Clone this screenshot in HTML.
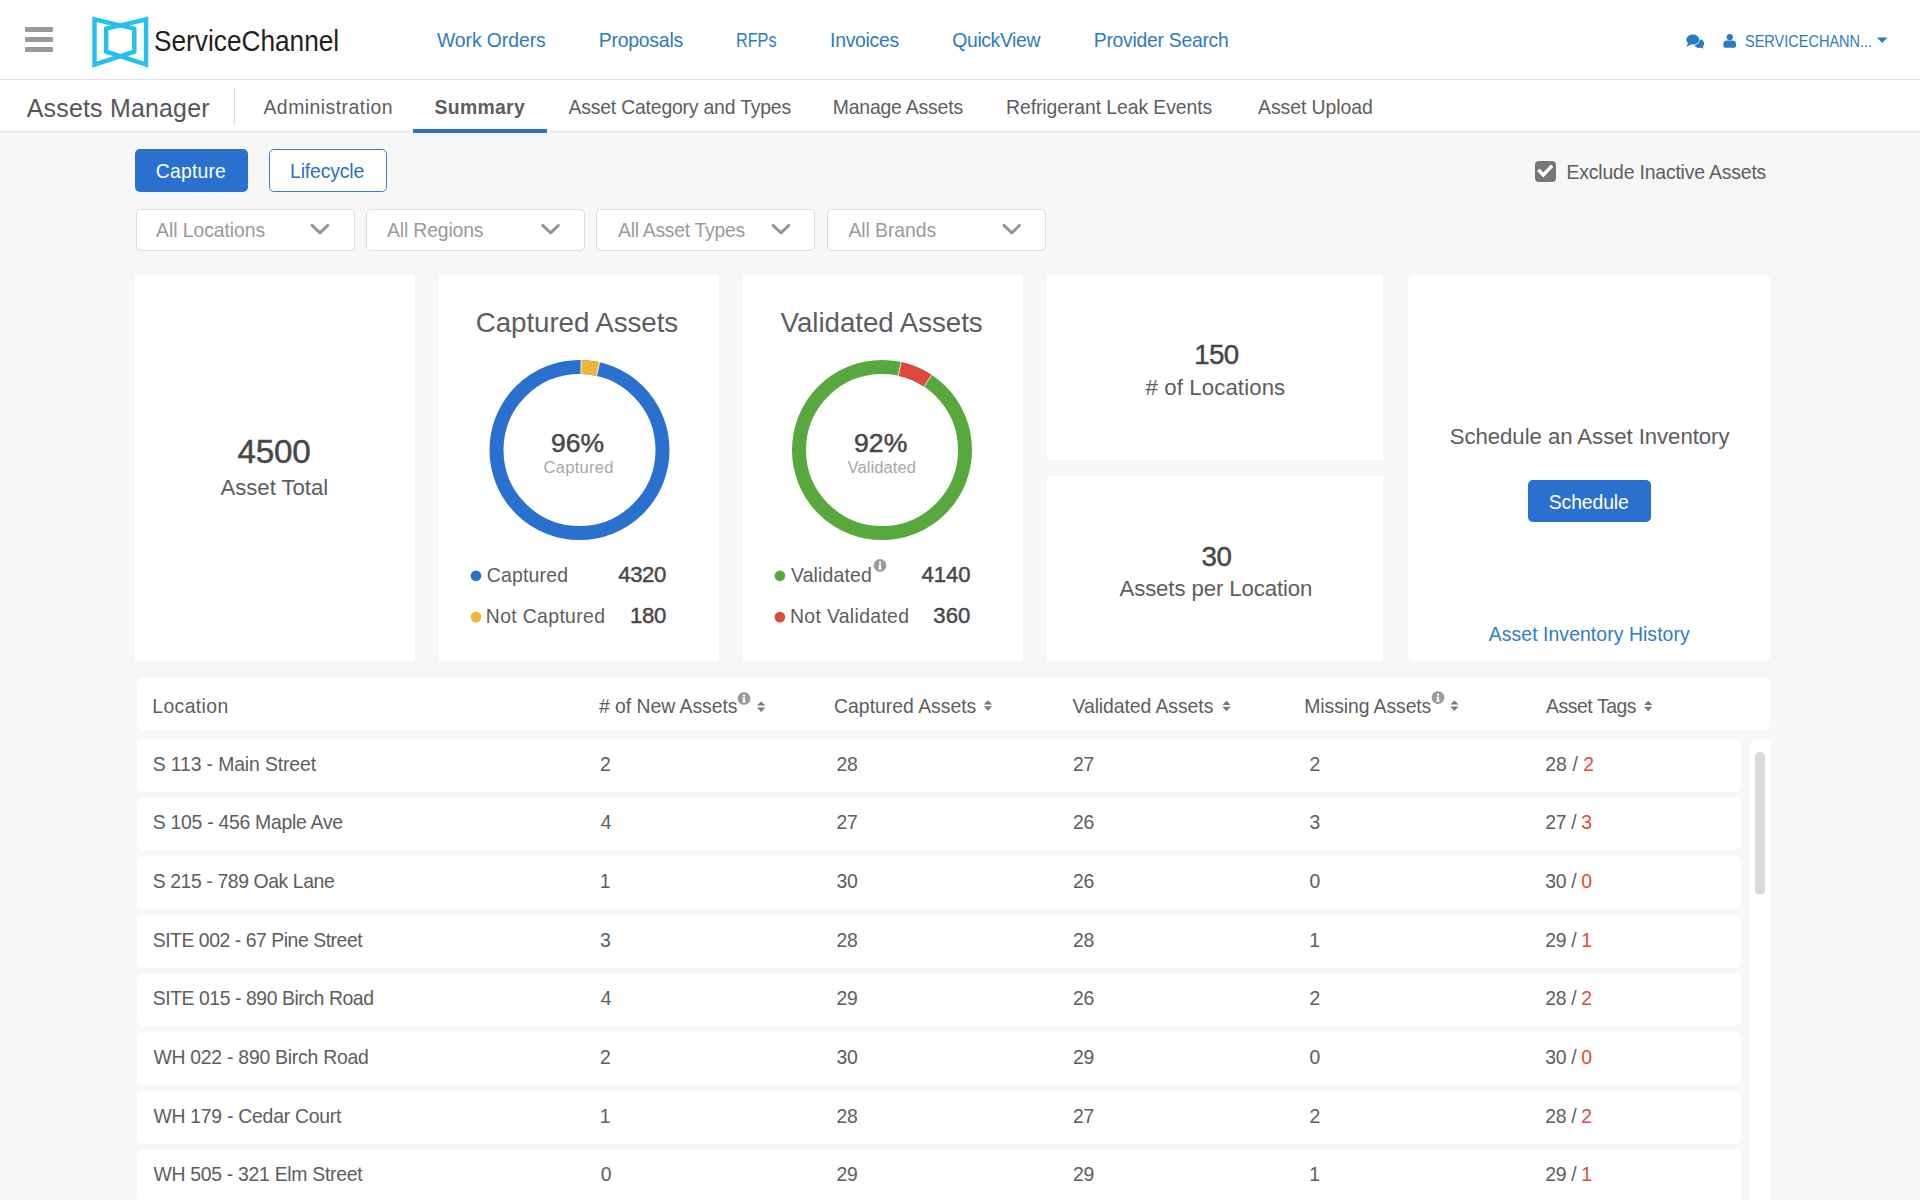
<!DOCTYPE html>
<html><head><meta charset="utf-8"><title>Assets Manager - Summary</title><style>
html,body{margin:0;padding:0;width:1920px;height:1200px;overflow:hidden;background:#f7f7f7;font-family:"Liberation Sans",sans-serif}
.b{position:absolute}
.t{position:absolute;white-space:nowrap;font-family:"Liberation Sans",sans-serif}
body{background:#f7f7f7}</style></head><body>
<div class="b" style="left:0;top:0;width:1920px;height:79px;background:#fff"></div>
<div class="b" style="left:0;top:79px;width:1920px;height:1px;background:#e3e3e3"></div>
<div class="b" style="left:0;top:80px;width:1920px;height:50px;background:#fff"></div>
<div class="b" style="left:0;top:130.5px;width:1920px;height:1px;background:#e9e9e9"></div>
<div class="b" style="left:0;top:131.5px;width:1920px;height:1.5px;background:#efefef"></div>
<div class="b" style="left:25px;top:27px;width:28.3px;height:4.6px;background:#9a9a9a;border-radius:1px"></div>
<div class="b" style="left:25px;top:37px;width:28.3px;height:4.6px;background:#9a9a9a;border-radius:1px"></div>
<div class="b" style="left:25px;top:47px;width:28.3px;height:4.6px;background:#9a9a9a;border-radius:1px"></div>
<div class="b" style="left:233.5px;top:88px;width:1px;height:37px;background:#dedede"></div>
<div class="b" style="left:413px;top:129px;width:133.6px;height:4px;background:#2a6fd0"></div>
<div class="b" style="left:134.7px;top:149.3px;width:113.2px;height:42.6px;background:#2a70cf;border-radius:5px"></div>
<div class="b" style="left:269.4px;top:149.3px;width:117.5px;height:42.6px;background:#fff;border:1.8px solid #3b80d6;box-sizing:border-box;border-radius:5px"></div>
<div class="b" style="left:135.5px;top:208.5px;width:219px;height:42px;background:#fff;border:1px solid #dcdcdc;box-sizing:border-box;border-radius:5px"></div>
<div class="b" style="left:366.2px;top:208.5px;width:219px;height:42px;background:#fff;border:1px solid #dcdcdc;box-sizing:border-box;border-radius:5px"></div>
<div class="b" style="left:596.3px;top:208.5px;width:219px;height:42px;background:#fff;border:1px solid #dcdcdc;box-sizing:border-box;border-radius:5px"></div>
<div class="b" style="left:827.3px;top:208.5px;width:219px;height:42px;background:#fff;border:1px solid #dcdcdc;box-sizing:border-box;border-radius:5px"></div>
<div class="b" style="left:1534.8px;top:160.7px;width:21.1px;height:21.1px;background:#777;border-radius:4px"></div>
<div class="b" style="left:134.7px;top:274.7px;width:280px;height:386.1px;background:#fff;border-radius:0px"></div>
<div class="b" style="left:438.5px;top:274.7px;width:280px;height:386.1px;background:#fff;border-radius:0px"></div>
<div class="b" style="left:743px;top:274.7px;width:279.6px;height:386.1px;background:#fff;border-radius:0px"></div>
<div class="b" style="left:1046.7px;top:274.7px;width:336.8px;height:185.5px;background:#fff;border-radius:0px"></div>
<div class="b" style="left:1046.7px;top:475.7px;width:336.8px;height:185.1px;background:#fff;border-radius:0px"></div>
<div class="b" style="left:1408.2px;top:274.7px;width:362.3px;height:386.1px;background:#fff;border-radius:5px"></div>
<div class="b" style="left:1528.3px;top:479.8px;width:122.5px;height:42.7px;background:#2a70cf;border-radius:5px"></div>
<div class="b" style="left:137.2px;top:677px;width:1633.3px;height:53.3px;background:#fff;border-radius:6px"></div>
<div class="b" style="left:137.2px;top:738.80px;width:1603.5px;height:53px;background:#fff;border-radius:6px"></div>
<div class="b" style="left:137.2px;top:797.47px;width:1603.5px;height:53px;background:#fff;border-radius:6px"></div>
<div class="b" style="left:137.2px;top:856.14px;width:1603.5px;height:53px;background:#fff;border-radius:6px"></div>
<div class="b" style="left:137.2px;top:914.81px;width:1603.5px;height:53px;background:#fff;border-radius:6px"></div>
<div class="b" style="left:137.2px;top:973.48px;width:1603.5px;height:53px;background:#fff;border-radius:6px"></div>
<div class="b" style="left:137.2px;top:1032.15px;width:1603.5px;height:53px;background:#fff;border-radius:6px"></div>
<div class="b" style="left:137.2px;top:1090.82px;width:1603.5px;height:53px;background:#fff;border-radius:6px"></div>
<div class="b" style="left:137.2px;top:1149.49px;width:1603.5px;height:53px;background:#fff;border-radius:6px"></div>
<div class="b" style="left:1749.5px;top:739.3px;width:21px;height:480px;background:#fff;border-radius:6px"></div>
<div class="b" style="left:1754.6px;top:752.3px;width:10.7px;height:143px;background:#d9d9d9;border-radius:5.35px"></div>
<svg class="b" style="left:0;top:0" width="1920" height="1200" viewBox="0 0 1920 1200"><path d="M94.5,19.3 L134.3,28.7 L134.3,51.7 L94.5,64.6 Z M146.1,19.3 L106.2,28.7 L106.2,51.7 L146.1,64.6 Z" fill="none" stroke="#22c1f1" stroke-width="4.4" stroke-linejoin="miter" stroke-miterlimit="3"/><ellipse cx="1699.2" cy="43.6" rx="5" ry="4.4" fill="#2b7cbf"/><path d="M1699,46 L1703.8,48.8 L1702,44 Z" fill="#2b7cbf"/><ellipse cx="1692.8" cy="39.7" rx="7.1" ry="5.7" fill="#fff"/><ellipse cx="1692.8" cy="39.7" rx="6.5" ry="5.1" fill="#2b7cbf"/><path d="M1688,43 L1686.5,46.8 L1691.5,44.3 Z" fill="#2b7cbf"/><circle cx="1729.8" cy="37.2" r="3.1" fill="#2b7cbf"/><path d="M1725,47.7 Q1723.4,47.7 1723.4,46 L1723.4,44 Q1723.4,40.6 1727,40.6 L1732.4,40.6 Q1736,40.6 1736,44 L1736,46 Q1736,47.7 1734.4,47.7 Z" fill="#2b7cbf"/><path d="M1877,37.4 L1887.4,37.4 L1882.2,42.9 Z" fill="#2b7cbf"/><path d="M312.00,225.4 L320.00,232.9 L327.75,225.4" fill="none" stroke="#959595" stroke-width="2.9" stroke-linecap="round" stroke-linejoin="round"/><path d="M542.70,225.4 L550.70,232.9 L558.45,225.4" fill="none" stroke="#959595" stroke-width="2.9" stroke-linecap="round" stroke-linejoin="round"/><path d="M773.00,225.4 L781.00,232.9 L788.75,225.4" fill="none" stroke="#959595" stroke-width="2.9" stroke-linecap="round" stroke-linejoin="round"/><path d="M1003.80,225.4 L1011.80,232.9 L1019.55,225.4" fill="none" stroke="#959595" stroke-width="2.9" stroke-linecap="round" stroke-linejoin="round"/><path d="M1538.3,169.8 L1543.3,175.0 L1552.1,165.7" fill="none" stroke="#fff" stroke-width="3.4" stroke-linecap="butt"/><circle cx="579.5" cy="450" r="83" fill="none" stroke="#2a70cf" stroke-width="14"/><path d="M580.95,367.01 A83,83 0 0 1 598.17,369.13" fill="none" stroke="#f2b53a" stroke-width="14"/><path d="M580.82,374.51 L581.08,359.51 M596.48,376.44 L599.86,361.82" stroke="#ffffff" stroke-width="0.8" fill="none"/><circle cx="882" cy="450" r="83" fill="none" stroke="#59a83d" stroke-width="14"/><path d="M899.68,368.91 A83,83 0 0 1 927.81,380.79" fill="none" stroke="#df483c" stroke-width="14"/><path d="M898.08,376.23 L901.28,361.58 M923.67,387.04 L931.95,374.53" stroke="#ffffff" stroke-width="0.8" fill="none"/><circle cx="476" cy="575.8" r="5.35" fill="#2a70cf"/><circle cx="476" cy="617.1" r="5.35" fill="#f2b53a"/><circle cx="779.9" cy="575.8" r="5.35" fill="#59a83d"/><circle cx="779.9" cy="617.1" r="5.35" fill="#df483c"/><circle cx="880" cy="565.4" r="6.35" fill="#9a9a9a"/><rect x="878.90" y="561.50" width="2.2" height="2" fill="#fff"/><path d="M878.30,564.50 H881.10 V568.40 H881.90 V569.50 H878.10 V568.40 H878.90 V565.60 H878.30 Z" fill="#fff"/><circle cx="744" cy="698.4" r="6.35" fill="#9a9a9a"/><rect x="742.90" y="694.50" width="2.2" height="2" fill="#fff"/><path d="M742.30,697.50 H745.10 V701.40 H745.90 V702.50 H742.10 V701.40 H742.90 V698.60 H742.30 Z" fill="#fff"/><circle cx="1438" cy="697.6" r="6.35" fill="#9a9a9a"/><rect x="1436.90" y="693.70" width="2.2" height="2" fill="#fff"/><path d="M1436.30,696.70 H1439.10 V700.60 H1439.90 V701.70 H1436.10 V700.60 H1436.90 V697.80 H1436.30 Z" fill="#fff"/><path d="M757.00,705.60 L761.20,701.50 L765.40,705.60 Z M757.00,707.50 L765.40,707.50 L761.20,711.90 Z" fill="#7a7a7a"/><path d="M983.70,704.40 L987.90,700.30 L992.10,704.40 Z M983.70,706.30 L992.10,706.30 L987.90,710.70 Z" fill="#7a7a7a"/><path d="M1222.30,704.90 L1226.50,700.80 L1230.70,704.90 Z M1222.30,706.80 L1230.70,706.80 L1226.50,711.20 Z" fill="#7a7a7a"/><path d="M1450.20,704.60 L1454.40,700.50 L1458.60,704.60 Z M1450.20,706.50 L1458.60,706.50 L1454.40,710.90 Z" fill="#7a7a7a"/><path d="M1644.00,704.90 L1648.20,700.80 L1652.40,704.90 Z M1644.00,706.80 L1652.40,706.80 L1648.20,711.20 Z" fill="#7a7a7a"/></svg>
<span class="t" style="left:154.39px;top:26.00px;font-size:29.51px;line-height:30px;letter-spacing:0.000px;font-weight:400;color:#231f20;transform:scaleX(0.8892);transform-origin:0 0">ServiceChannel</span>
<span class="t" style="left:437.00px;top:31.00px;font-size:19.39px;line-height:19px;letter-spacing:-0.074px;font-weight:400;color:#2b7cbf">Work Orders</span>
<span class="t" style="left:598.78px;top:31.00px;font-size:19.39px;line-height:19px;letter-spacing:-0.219px;font-weight:400;color:#2b7cbf">Proposals</span>
<span class="t" style="left:736.45px;top:31.00px;font-size:19.39px;line-height:19px;letter-spacing:0.000px;font-weight:400;color:#2b7cbf;transform:scaleX(0.8366);transform-origin:0 0">RFPs</span>
<span class="t" style="left:830.02px;top:31.00px;font-size:19.39px;line-height:19px;letter-spacing:-0.270px;font-weight:400;color:#2b7cbf">Invoices</span>
<span class="t" style="left:952.30px;top:31.00px;font-size:19.39px;line-height:19px;letter-spacing:-0.380px;font-weight:400;color:#2b7cbf">QuickView</span>
<span class="t" style="left:1093.78px;top:31.00px;font-size:19.39px;line-height:19px;letter-spacing:-0.282px;font-weight:400;color:#2b7cbf">Provider Search</span>
<span class="t" style="left:1745.34px;top:33.00px;font-size:16.62px;line-height:17px;letter-spacing:0.000px;font-weight:400;color:#2b7cbf;transform:scaleX(0.8738);transform-origin:0 0">SERVICECHANN...</span>
<span class="t" style="left:26.76px;top:96.00px;font-size:24.93px;line-height:25px;letter-spacing:0.208px;font-weight:400;color:#555555">Assets Manager</span>
<span class="t" style="left:263.48px;top:98.00px;font-size:19.39px;line-height:19px;letter-spacing:0.481px;font-weight:400;color:#5d5d5d">Administration</span>
<span class="t" style="left:434.56px;top:98.00px;font-size:19.39px;line-height:19px;letter-spacing:0.315px;font-weight:700;color:#5d5d5d">Summary</span>
<span class="t" style="left:568.50px;top:98.00px;font-size:19.39px;line-height:19px;letter-spacing:-0.187px;font-weight:400;color:#5d5d5d">Asset Category and Types</span>
<span class="t" style="left:832.80px;top:98.00px;font-size:19.39px;line-height:19px;letter-spacing:-0.183px;font-weight:400;color:#5d5d5d">Manage Assets</span>
<span class="t" style="left:1006.06px;top:98.00px;font-size:19.39px;line-height:19px;letter-spacing:-0.079px;font-weight:400;color:#5d5d5d">Refrigerant Leak Events</span>
<span class="t" style="left:1258.00px;top:98.00px;font-size:19.39px;line-height:19px;letter-spacing:-0.046px;font-weight:400;color:#5d5d5d">Asset Upload</span>
<span class="t" style="left:155.82px;top:162.00px;font-size:19.39px;line-height:19px;letter-spacing:0.174px;font-weight:400;color:#ffffff">Capture</span>
<span class="t" style="left:290.06px;top:162.00px;font-size:19.39px;line-height:19px;letter-spacing:-0.146px;font-weight:400;color:#2a6fc9">Lifecycle</span>
<span class="t" style="left:156.02px;top:221.00px;font-size:19.39px;line-height:19px;letter-spacing:-0.056px;font-weight:400;color:#9a9a9a">All Locations</span>
<span class="t" style="left:387.00px;top:221.00px;font-size:19.39px;line-height:19px;letter-spacing:-0.148px;font-weight:400;color:#9a9a9a">All Regions</span>
<span class="t" style="left:618.00px;top:221.00px;font-size:19.39px;line-height:19px;letter-spacing:-0.274px;font-weight:400;color:#9a9a9a">All Asset Types</span>
<span class="t" style="left:848.48px;top:221.00px;font-size:19.39px;line-height:19px;letter-spacing:-0.066px;font-weight:400;color:#9a9a9a">All Brands</span>
<span class="t" style="left:1566.52px;top:163.00px;font-size:19.39px;line-height:19px;letter-spacing:-0.171px;font-weight:400;color:#5d5d5d">Exclude Inactive Assets</span>
<span class="t" style="left:237.52px;top:435.00px;font-size:33.24px;line-height:33px;letter-spacing:-0.257px;font-weight:400;color:#474747;-webkit-text-stroke:0.45px #474747">4500</span>
<span class="t" style="left:220.48px;top:477.00px;font-size:22.16px;line-height:22px;letter-spacing:-0.023px;font-weight:400;color:#5d5d5d">Asset Total</span>
<span class="t" style="left:475.78px;top:309.00px;font-size:27.70px;line-height:28px;letter-spacing:-0.051px;font-weight:400;color:#5d5d5d">Captured Assets</span>
<span class="t" style="left:550.92px;top:431.00px;font-size:24.93px;line-height:25px;letter-spacing:0.000px;font-weight:400;color:#474747;-webkit-text-stroke:0.45px #474747;transform:scaleX(1.0633);transform-origin:0 0">96%</span>
<span class="t" style="left:543.58px;top:459.00px;font-size:16.62px;line-height:17px;letter-spacing:0.221px;font-weight:400;color:#a8a8a8">Captured</span>
<span class="t" style="left:486.80px;top:566.00px;font-size:19.39px;line-height:19px;letter-spacing:0.216px;font-weight:400;color:#5d5d5d">Captured</span>
<span class="t" style="left:618.24px;top:564.00px;font-size:22.16px;line-height:22px;letter-spacing:-0.409px;font-weight:400;color:#474747;-webkit-text-stroke:0.45px #474747">4320</span>
<span class="t" style="left:485.80px;top:607.00px;font-size:19.39px;line-height:19px;letter-spacing:0.358px;font-weight:400;color:#5d5d5d">Not Captured</span>
<span class="t" style="left:630.02px;top:605.00px;font-size:22.16px;line-height:22px;letter-spacing:-0.342px;font-weight:400;color:#474747;-webkit-text-stroke:0.45px #474747">180</span>
<span class="t" style="left:780.52px;top:309.00px;font-size:27.70px;line-height:28px;letter-spacing:-0.030px;font-weight:400;color:#5d5d5d">Validated Assets</span>
<span class="t" style="left:854.46px;top:431.00px;font-size:24.93px;line-height:25px;letter-spacing:0.000px;font-weight:400;color:#474747;-webkit-text-stroke:0.45px #474747;transform:scaleX(1.0695);transform-origin:0 0">92%</span>
<span class="t" style="left:847.50px;top:459.00px;font-size:16.62px;line-height:17px;letter-spacing:0.054px;font-weight:400;color:#a8a8a8">Validated</span>
<span class="t" style="left:791.02px;top:566.00px;font-size:19.39px;line-height:19px;letter-spacing:0.175px;font-weight:400;color:#5d5d5d">Validated</span>
<span class="t" style="left:921.52px;top:564.00px;font-size:22.16px;line-height:22px;letter-spacing:-0.082px;font-weight:400;color:#474747;-webkit-text-stroke:0.45px #474747">4140</span>
<span class="t" style="left:790.02px;top:607.00px;font-size:19.39px;line-height:19px;letter-spacing:0.341px;font-weight:400;color:#5d5d5d">Not Validated</span>
<span class="t" style="left:933.30px;top:605.00px;font-size:22.16px;line-height:22px;letter-spacing:0.028px;font-weight:400;color:#474747;-webkit-text-stroke:0.45px #474747">360</span>
<span class="t" style="left:1194.20px;top:341.00px;font-size:27.70px;line-height:28px;letter-spacing:-0.628px;font-weight:400;color:#474747;-webkit-text-stroke:0.45px #474747">150</span>
<span class="t" style="left:1145.52px;top:377.00px;font-size:22.16px;line-height:22px;letter-spacing:0.131px;font-weight:400;color:#5d5d5d"># of Locations</span>
<span class="t" style="left:1201.50px;top:543.00px;font-size:27.70px;line-height:28px;letter-spacing:-0.418px;font-weight:400;color:#474747;-webkit-text-stroke:0.45px #474747">30</span>
<span class="t" style="left:1119.48px;top:578.00px;font-size:22.16px;line-height:22px;letter-spacing:-0.097px;font-weight:400;color:#5d5d5d">Assets per Location</span>
<span class="t" style="left:1449.74px;top:426.00px;font-size:22.16px;line-height:22px;letter-spacing:-0.042px;font-weight:400;color:#5d5d5d">Schedule an Asset Inventory</span>
<span class="t" style="left:1548.82px;top:493.00px;font-size:19.39px;line-height:19px;letter-spacing:-0.120px;font-weight:400;color:#ffffff">Schedule</span>
<span class="t" style="left:1488.76px;top:625.00px;font-size:19.39px;line-height:19px;letter-spacing:0.078px;font-weight:400;color:#2f7bcc">Asset Inventory History</span>
<span class="t" style="left:152.28px;top:697.00px;font-size:19.39px;line-height:19px;letter-spacing:0.389px;font-weight:400;color:#5d5d5d">Location</span>
<span class="t" style="left:599.00px;top:697.00px;font-size:19.39px;line-height:19px;letter-spacing:-0.027px;font-weight:400;color:#5d5d5d"># of New Assets</span>
<span class="t" style="left:834.08px;top:697.00px;font-size:19.39px;line-height:19px;letter-spacing:0.005px;font-weight:400;color:#5d5d5d">Captured Assets</span>
<span class="t" style="left:1072.50px;top:697.00px;font-size:19.39px;line-height:19px;letter-spacing:-0.066px;font-weight:400;color:#5d5d5d">Validated Assets</span>
<span class="t" style="left:1304.30px;top:697.00px;font-size:19.39px;line-height:19px;letter-spacing:-0.086px;font-weight:400;color:#5d5d5d">Missing Assets</span>
<span class="t" style="left:1546.00px;top:697.00px;font-size:19.39px;line-height:19px;letter-spacing:-0.428px;font-weight:400;color:#5d5d5d">Asset Tags</span>
<span class="t" style="left:152.70px;top:755.00px;font-size:19.39px;line-height:19px;letter-spacing:-0.117px;font-weight:400;color:#5d5d5d">S 113 - Main Street</span>
<span class="t" style="left:600.08px;top:755.00px;font-size:19.39px;line-height:19px;letter-spacing:-0.331px;font-weight:400;color:#5d5d5d">2</span>
<span class="t" style="left:836.56px;top:755.00px;font-size:19.39px;line-height:19px;letter-spacing:-0.331px;font-weight:400;color:#5d5d5d">28</span>
<span class="t" style="left:1073.04px;top:755.00px;font-size:19.39px;line-height:19px;letter-spacing:-0.331px;font-weight:400;color:#5d5d5d">27</span>
<span class="t" style="left:1309.56px;top:755.00px;font-size:19.39px;line-height:19px;letter-spacing:-0.331px;font-weight:400;color:#5d5d5d">2</span>
<span class="t" style="left:1545.30px;top:755.00px;font-size:19.39px;line-height:19px;letter-spacing:0.052px;font-weight:400;color:#5d5d5d">28 / <span style="color:#e04a3f">2</span></span>
<span class="t" style="left:152.70px;top:813.00px;font-size:19.39px;line-height:19px;letter-spacing:-0.262px;font-weight:400;color:#5d5d5d">S 105 - 456 Maple Ave</span>
<span class="t" style="left:600.78px;top:813.00px;font-size:19.39px;line-height:19px;letter-spacing:-0.331px;font-weight:400;color:#5d5d5d">4</span>
<span class="t" style="left:836.56px;top:813.00px;font-size:19.39px;line-height:19px;letter-spacing:-0.331px;font-weight:400;color:#5d5d5d">27</span>
<span class="t" style="left:1073.04px;top:813.00px;font-size:19.39px;line-height:19px;letter-spacing:-0.331px;font-weight:400;color:#5d5d5d">26</span>
<span class="t" style="left:1309.56px;top:813.00px;font-size:19.39px;line-height:19px;letter-spacing:-0.331px;font-weight:400;color:#5d5d5d">3</span>
<span class="t" style="left:1545.30px;top:813.00px;font-size:19.39px;line-height:19px;letter-spacing:-0.331px;font-weight:400;color:#5d5d5d">27 / <span style="color:#e04a3f">3</span></span>
<span class="t" style="left:152.70px;top:872.00px;font-size:19.39px;line-height:19px;letter-spacing:-0.395px;font-weight:400;color:#5d5d5d">S 215 - 789 Oak Lane</span>
<span class="t" style="left:599.78px;top:872.00px;font-size:19.39px;line-height:19px;letter-spacing:-0.331px;font-weight:400;color:#5d5d5d">1</span>
<span class="t" style="left:836.56px;top:872.00px;font-size:19.39px;line-height:19px;letter-spacing:-0.331px;font-weight:400;color:#5d5d5d">30</span>
<span class="t" style="left:1073.04px;top:872.00px;font-size:19.39px;line-height:19px;letter-spacing:-0.331px;font-weight:400;color:#5d5d5d">26</span>
<span class="t" style="left:1309.56px;top:872.00px;font-size:19.39px;line-height:19px;letter-spacing:-0.331px;font-weight:400;color:#5d5d5d">0</span>
<span class="t" style="left:1545.30px;top:872.00px;font-size:19.39px;line-height:19px;letter-spacing:-0.331px;font-weight:400;color:#5d5d5d">30 / <span style="color:#e04a3f">0</span></span>
<span class="t" style="left:152.70px;top:931.00px;font-size:19.39px;line-height:19px;letter-spacing:-0.453px;font-weight:400;color:#5d5d5d">SITE 002 - 67 Pine Street</span>
<span class="t" style="left:600.08px;top:931.00px;font-size:19.39px;line-height:19px;letter-spacing:-0.331px;font-weight:400;color:#5d5d5d">3</span>
<span class="t" style="left:836.56px;top:931.00px;font-size:19.39px;line-height:19px;letter-spacing:-0.331px;font-weight:400;color:#5d5d5d">28</span>
<span class="t" style="left:1073.04px;top:931.00px;font-size:19.39px;line-height:19px;letter-spacing:-0.331px;font-weight:400;color:#5d5d5d">28</span>
<span class="t" style="left:1309.26px;top:931.00px;font-size:19.39px;line-height:19px;letter-spacing:-0.331px;font-weight:400;color:#5d5d5d">1</span>
<span class="t" style="left:1545.30px;top:931.00px;font-size:19.39px;line-height:19px;letter-spacing:-0.331px;font-weight:400;color:#5d5d5d">29 / <span style="color:#e04a3f">1</span></span>
<span class="t" style="left:152.70px;top:989.00px;font-size:19.39px;line-height:19px;letter-spacing:-0.428px;font-weight:400;color:#5d5d5d">SITE 015 - 890 Birch Road</span>
<span class="t" style="left:600.78px;top:989.00px;font-size:19.39px;line-height:19px;letter-spacing:-0.331px;font-weight:400;color:#5d5d5d">4</span>
<span class="t" style="left:836.56px;top:989.00px;font-size:19.39px;line-height:19px;letter-spacing:-0.331px;font-weight:400;color:#5d5d5d">29</span>
<span class="t" style="left:1073.04px;top:989.00px;font-size:19.39px;line-height:19px;letter-spacing:-0.331px;font-weight:400;color:#5d5d5d">26</span>
<span class="t" style="left:1309.56px;top:989.00px;font-size:19.39px;line-height:19px;letter-spacing:-0.331px;font-weight:400;color:#5d5d5d">2</span>
<span class="t" style="left:1545.30px;top:989.00px;font-size:19.39px;line-height:19px;letter-spacing:-0.331px;font-weight:400;color:#5d5d5d">28 / <span style="color:#e04a3f">2</span></span>
<span class="t" style="left:153.40px;top:1048.00px;font-size:19.39px;line-height:19px;letter-spacing:-0.247px;font-weight:400;color:#5d5d5d">WH 022 - 890 Birch Road</span>
<span class="t" style="left:600.08px;top:1048.00px;font-size:19.39px;line-height:19px;letter-spacing:-0.331px;font-weight:400;color:#5d5d5d">2</span>
<span class="t" style="left:836.56px;top:1048.00px;font-size:19.39px;line-height:19px;letter-spacing:-0.331px;font-weight:400;color:#5d5d5d">30</span>
<span class="t" style="left:1073.04px;top:1048.00px;font-size:19.39px;line-height:19px;letter-spacing:-0.331px;font-weight:400;color:#5d5d5d">29</span>
<span class="t" style="left:1309.56px;top:1048.00px;font-size:19.39px;line-height:19px;letter-spacing:-0.331px;font-weight:400;color:#5d5d5d">0</span>
<span class="t" style="left:1545.30px;top:1048.00px;font-size:19.39px;line-height:19px;letter-spacing:-0.331px;font-weight:400;color:#5d5d5d">30 / <span style="color:#e04a3f">0</span></span>
<span class="t" style="left:153.40px;top:1107.00px;font-size:19.39px;line-height:19px;letter-spacing:-0.251px;font-weight:400;color:#5d5d5d">WH 179 - Cedar Court</span>
<span class="t" style="left:599.78px;top:1107.00px;font-size:19.39px;line-height:19px;letter-spacing:-0.331px;font-weight:400;color:#5d5d5d">1</span>
<span class="t" style="left:836.56px;top:1107.00px;font-size:19.39px;line-height:19px;letter-spacing:-0.331px;font-weight:400;color:#5d5d5d">28</span>
<span class="t" style="left:1073.04px;top:1107.00px;font-size:19.39px;line-height:19px;letter-spacing:-0.331px;font-weight:400;color:#5d5d5d">27</span>
<span class="t" style="left:1309.56px;top:1107.00px;font-size:19.39px;line-height:19px;letter-spacing:-0.331px;font-weight:400;color:#5d5d5d">2</span>
<span class="t" style="left:1545.30px;top:1107.00px;font-size:19.39px;line-height:19px;letter-spacing:-0.331px;font-weight:400;color:#5d5d5d">28 / <span style="color:#e04a3f">2</span></span>
<span class="t" style="left:153.40px;top:1165.00px;font-size:19.39px;line-height:19px;letter-spacing:-0.280px;font-weight:400;color:#5d5d5d">WH 505 - 321 Elm Street</span>
<span class="t" style="left:600.78px;top:1165.00px;font-size:19.39px;line-height:19px;letter-spacing:-0.331px;font-weight:400;color:#5d5d5d">0</span>
<span class="t" style="left:836.56px;top:1165.00px;font-size:19.39px;line-height:19px;letter-spacing:-0.331px;font-weight:400;color:#5d5d5d">29</span>
<span class="t" style="left:1073.04px;top:1165.00px;font-size:19.39px;line-height:19px;letter-spacing:-0.331px;font-weight:400;color:#5d5d5d">29</span>
<span class="t" style="left:1309.26px;top:1165.00px;font-size:19.39px;line-height:19px;letter-spacing:-0.331px;font-weight:400;color:#5d5d5d">1</span>
<span class="t" style="left:1545.30px;top:1165.00px;font-size:19.39px;line-height:19px;letter-spacing:-0.331px;font-weight:400;color:#5d5d5d">29 / <span style="color:#e04a3f">1</span></span>
</body></html>
